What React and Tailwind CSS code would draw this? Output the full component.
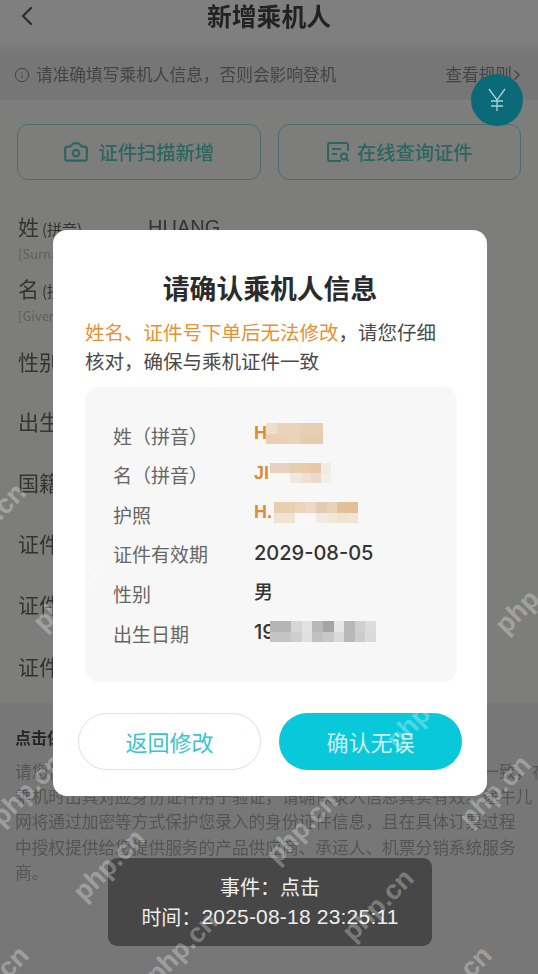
import { Camera, ChevronLeft, ChevronRight, Info } from 'lucide-react';

const cjk = "font-['Noto_Sans_CJK_SC','Liberation_Sans',sans-serif]";

const formRows = [
    { label: '性别', h: 'h-[61px]' },
    { label: '出生日期', h: 'h-[60px]' },
    { label: '国籍', h: 'h-[61px]' },
    { label: '证件类型', h: 'h-[61px]' },
    { label: '证件号码', h: 'h-[62px]' },
    { label: '证件有效期', h: 'h-[61px]' },
];

const noticeLines = [
    '请您仔细核对乘机人信息，乘机人姓名与证件需与登机所持证件一致，在',
    '乘机时出具对应身份证件用于验证，请确保录入信息真实有效。途牛儿',
    '网将通过加密等方式保护您录入的身份证件信息，且在具体订票过程',
    '中授权提供给您提供服务的产品供应商、承运人、机票分销系统服务',
    '商。',
];

// pixelated (censored) blocks next to the values
const surnameBlocks = [
    ['bg-[#eddfcd]', 'bg-[#e9d3ba]', 'bg-[#e9d3ba]', 'bg-[#e7cfb3]', 'bg-[#e7cfb3]'],
    ['bg-[#e9d0b4]', 'bg-[#e9d0b4]', 'bg-[#e9d3ba]', 'bg-[#e6ccae]', 'bg-[#e6ccae]'],
];
const givenBlocks = [
    ['bg-[#e8d0c0]', 'bg-[#e8d0c0]', 'bg-[#e4cfae]', 'bg-[#eacaa4]', 'bg-[#e4c8a8]', 'bg-[#efece6]'],
    ['bg-[#f8f7f6]', 'bg-[#f8f7f6]', 'bg-[#efe8e0]', 'bg-[#eee0d2]', 'bg-[#ecd8cc]', 'bg-[#f1efea]'],
];
const passportBlocks = [
    ['bg-[#e6cfae]', 'bg-[#e8cfae]', 'bg-[#ead6bc]', 'bg-[#ecd8c4]', 'bg-[#e4cab4]', 'bg-[#e8d2b8]', 'bg-[#e2c198]', 'bg-[#e2bf94]'],
    ['bg-[#efe4d4]', 'bg-[#efe4d4]', 'bg-[#f8f8f8]', 'bg-[#f8f8f8]', 'bg-[#f1ebe3]', 'bg-[#f0e6da]', 'bg-[#efe2d2]', 'bg-[#efe4d6]'],
];
const birthBlocks = [
    ['bg-[#b4b4b4]', 'bg-[#b4b4b4]', 'bg-[#d6d6d6]', 'bg-[#e2e2e2]', 'bg-[#b8b8b8]', 'bg-[#a4a4a4]', 'bg-[#e6e6e6]', 'bg-[#b8b8b8]', 'bg-[#d0d0d0]', 'bg-[#dcdcdc]'],
    ['bg-[#c4c4c4]', 'bg-[#c4c4c4]', 'bg-[#cecece]', 'bg-[#e0e0e0]', 'bg-[#c0c0c0]', 'bg-[#c8c8c8]', 'bg-[#dadada]', 'bg-[#b8b8b8]', 'bg-[#cccccc]', 'bg-[#dadada]'],
];

const watermarks = [
    'left-[-10px] top-[519px]',
    'left-[69px] top-[595px]',
    'left-[531px] top-[598px]',
    'left-[422px] top-[713px]',
    'left-[27px] top-[790px]',
    'left-[495px] top-[791px]',
    'left-[302px] top-[828px]',
    'left-[109px] top-[865px]',
    'left-[378px] top-[905px]',
    'left-[182px] top-[948px]',
    'left-[-7px] top-[982px]',
    'left-[456px] top-[982px]',
];

function Mosaic({ rows, className }) {
    return (
        <div className={`flex flex-col ${className}`}>
            {rows.map((row, i) => (
                <div key={i} className="flex flex-1">
                    {row.map((color, j) => (
                        <div key={j} className={`flex-1 ${color}`} />
                    ))}
                </div>
            ))}
        </div>
    );
}

function InfoRow({ label, children }) {
    return (
        <div className="flex h-[39.6px] items-center">
            <div className="w-[141px] shrink-0 text-[19px] text-[#666666]">{label}</div>
            <div className="flex items-center -mt-[4px]">{children}</div>
        </div>
    );
}

function ScanIcon() {
    return (
        <svg className="w-[24px] h-[22px]" viewBox="0 0 24 22" fill="none" stroke="currentColor" strokeWidth="2">
            <path d="M22 10V4a2 2 0 00-2-2H4a2 2 0 00-2 2v14a2 2 0 002 2h11" />
            <path d="M6 8h9M6 13h5" />
            <circle cx="18" cy="15.5" r="3" />
            <path d="M20.5 18l2 2" />
        </svg>
    );
}

function YenIcon() {
    return (
        <svg className="w-[18px] h-[24px]" viewBox="0 0 18 24" fill="none" stroke="currentColor" strokeWidth="1.3">
            <path d="M1 1l8 11 8-11M9 12v11M3 13h12M3 18h12" />
        </svg>
    );
}

export default function App() {
    return (
        <div className={`relative w-full h-[974px] overflow-hidden bg-[#7d7d7b] ${cjk}`}>
            {/* Page behind the dialog */}
            <div className="blur-[0.5px]">
                <div className="relative flex h-[40px] items-center justify-center bg-[#7f7f7f]">
                    <ChevronLeft className="absolute left-[11px] top-[0px] text-[#2c2c2c]" size={32} strokeWidth={1.6} />
                    <h1 className="-mt-[9px] text-[24.8px] font-semibold text-[#222222]">新增乘机人</h1>
                </div>
                <div className="flex h-[60px] items-center justify-between bg-linear-to-b from-[#7f7f7f] to-[#767676] to-[25%] pl-[14px] pr-[13px] pt-[10px]">
                    <div className="flex items-center gap-[6px] text-[16.7px] text-[#444444]">
                        <Info size={16} strokeWidth={1.5} />
                        <span>请准确填写乘机人信息，否则会影响登机</span>
                    </div>
                    <div className="flex items-center text-[16.7px] text-[#444444]">
                        <span>查看规则</span>
                        <ChevronRight className="-ml-[3px]" size={16} />
                    </div>
                </div>
                <div className="flex gap-[17px] px-[17px] pt-[24px]">
                    <button className="flex h-[56px] w-[244px] items-center justify-center gap-[9px] rounded-[11px] border-[1.5px] border-[#4d6f6a] text-[19.3px] font-medium text-[#2b6662]">
                        <Camera size={26} strokeWidth={2} />
                        <span>证件扫描新增</span>
                    </button>
                    <button className="flex h-[56px] w-[244px] items-center justify-center gap-[7px] rounded-[11px] border-[1.5px] border-[#4d6f6a] text-[19.3px] font-medium text-[#2b6662]">
                        <ScanIcon />
                        <span>在线查询证件</span>
                    </button>
                </div>
                <div className="px-[18px] pt-[31px] text-[#333333]">
                    <div className="flex h-[31px] items-center">
                        <span className="w-[130px] shrink-0 text-[21px]">姓<span className="ml-[3px] text-[15px]">(拼音)</span></span>
                        <span className="text-[20px] font-['Liberation_Sans',sans-serif] text-[#333333]">HUANG</span>
                    </div>
                    <div className="h-[31px] text-[13px] leading-[24px] text-[#5e5e5e]">[Surname]</div>
                    <div className="flex h-[31px] items-center">
                        <span className="text-[21px]">名<span className="ml-[3px] text-[15px]">(拼音)</span></span>
                    </div>
                    <div className="h-[27px] text-[13px] leading-[24px] text-[#5e5e5e]">[Given Name]</div>
                    {formRows.map((row) => (
                        <div key={row.label} className={`${row.h} flex items-center text-[21px]`}>{row.label}</div>
                    ))}
                </div>
                <div className="mt-[6px] h-[280px] bg-[#777777] px-[15px] pt-[22px]">
                    <div className="text-[16px] font-semibold text-[#262626]">点击保存代表同意以下内容</div>
                    <div className="mt-[10px] whitespace-nowrap text-[16.7px] leading-[25.2px] text-[#555555]">
                        {noticeLines.map((line) => (
                            <div key={line}>{line}</div>
                        ))}
                    </div>
                </div>
            </div>

            {/* Floating price button */}
            <div className="absolute left-[471px] top-[74px] flex h-[52px] w-[52px] items-center justify-center rounded-full bg-[#0b6a78] text-[#a9d4da]">
                <YenIcon />
            </div>

            {/* Confirm dialog */}
            <div className="absolute left-[53px] top-[230px] flex h-[566px] w-[434px] flex-col rounded-[14px] bg-white px-[25px]">
                <h2 className="mt-[39px] text-center text-[26.8px] leading-[38px] font-semibold text-[#2b2b2b]">请确认乘机人信息</h2>
                <p className="mt-[11px] px-[7px] text-[19.5px] leading-[28.5px] whitespace-nowrap text-[#4a4a4a]">
                    <span className="text-[#e98f35]">姓名、证件号下单后无法修改</span>，请您仔细
                    <br />
                    核对，确保与乘机证件一致
                </p>
                <div className="ml-[7px] mr-[5px] mt-[12px] h-[295px] rounded-[14px] bg-[#f7f7f7] pl-[28px] pt-[29px]">
                    <InfoRow label="姓（拼音）">
                        <span className="w-[12px] text-[18px] font-semibold text-[#dc8d37] font-['Liberation_Sans',sans-serif]">H</span>
                        <Mosaic rows={surnameBlocks} className="h-[21px] w-[57px]" />
                    </InfoRow>
                    <InfoRow label="名（拼音）">
                        <span className="w-[16px] text-[18px] font-semibold text-[#dc8d37] font-['Liberation_Sans',sans-serif]">JI</span>
                        <Mosaic rows={givenBlocks} className="h-[20px] w-[61px]" />
                    </InfoRow>
                    <InfoRow label="护照">
                        <span className="w-[20px] text-[18px] font-semibold text-[#dc8d37] font-['Liberation_Sans',sans-serif]">H.</span>
                        <Mosaic rows={passportBlocks} className="h-[21px] w-[84px]" />
                    </InfoRow>
                    <InfoRow label="证件有效期">
                        <span className="text-[20px] font-medium text-[#333333] font-['Inter',sans-serif]">2029-08-05</span>
                    </InfoRow>
                    <InfoRow label="性别">
                        <span className="-mt-[2px] text-[19px] font-medium text-[#333333]">男</span>
                    </InfoRow>
                    <InfoRow label="出生日期">
                        <span className="w-[16px] overflow-hidden text-[20px] font-medium whitespace-nowrap text-[#333333] font-['Inter',sans-serif]">19</span>
                        <Mosaic rows={birthBlocks} className="h-[21px] w-[106px]" />
                    </InfoRow>
                </div>
                <div className="mt-[31px] flex justify-between">
                    <button className="h-[57px] w-[183px] rounded-full border border-[#d4e4e4] bg-white text-[22px] text-[#3ac3d0]">返回修改</button>
                    <button className="ml-[1px] h-[57px] w-[183px] rounded-full bg-[#08c8da] text-[22px] text-[#cdf2f5]">确认无误</button>
                </div>
            </div>

            {/* Event toast */}
            <div className="absolute left-[108px] top-[858px] flex h-[88px] w-[324px] flex-col items-center justify-center rounded-[9px] bg-[#474747] text-[#eeeeee]">
                <div className="text-[20px] leading-[30px]">事件：点击</div>
                <div className="flex text-[20px] leading-[30px]">
                    <span>时间：</span>
                    <span className="font-['Liberation_Sans',sans-serif] text-[21px] tracking-[0.2px]">2025-08-18 23:25:11</span>
                </div>
            </div>

            {/* Image watermark */}
            {watermarks.map((pos) => (
                <div
                    key={pos}
                    className={`absolute ${pos} -translate-x-1/2 -translate-y-1/2 -rotate-45 text-[27px] font-bold whitespace-nowrap text-white/30 font-['Liberation_Sans',sans-serif]`}
                >
                    php.cn
                </div>
            ))}
        </div>
    );
}
